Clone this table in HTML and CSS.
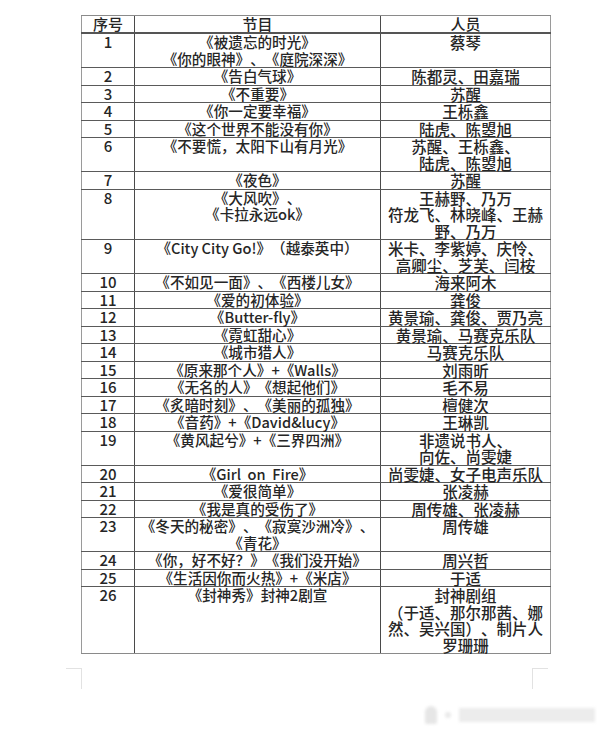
FILE: index.html
```html
<!DOCTYPE html>
<html lang="zh-CN">
<head>
<meta charset="utf-8">
<title>节目单</title>
<link rel="stylesheet" href="styles.css">
</head>
<body>
<div class="page">
  <table class="list">
    <colgroup>
      <col class="c-no">
      <col class="c-show">
      <col class="c-who">
    </colgroup>
    <thead>
      <tr><th>序号</th><th>节目</th><th>人员</th></tr>
    </thead>
    <tbody>
      <tr><td>1</td><td>《被遗忘的时光》<br>《你的眼神》、《庭院深深》</td><td>蔡琴</td></tr>
      <tr><td>2</td><td>《告白气球》</td><td>陈都灵、田嘉瑞</td></tr>
      <tr><td>3</td><td>《不重要》</td><td>苏醒</td></tr>
      <tr><td>4</td><td>《你一定要幸福》</td><td>王栎鑫</td></tr>
      <tr><td>5</td><td>《这个世界不能没有你》</td><td>陆虎、陈曌旭</td></tr>
      <tr><td>6</td><td>《不要慌，太阳下山有月光》</td><td>苏醒、王栎鑫、<br>陆虎、陈曌旭</td></tr>
      <tr><td>7</td><td>《夜色》</td><td>苏醒</td></tr>
      <tr><td>8</td><td>《大风吹》、<br>《卡拉永远ok》</td><td>王赫野、乃万<br>符龙飞、林晓峰、王赫<br>野、乃万</td></tr>
      <tr><td>9</td><td>《City City Go!》（越泰英中）</td><td>米卡、李紫婷、庆怜、<br>高卿尘、芝芙、闫桉</td></tr>
      <tr><td>10</td><td>《不如见一面》、《西楼儿女》</td><td>海来阿木</td></tr>
      <tr><td>11</td><td>《爱的初体验》</td><td>龚俊</td></tr>
      <tr><td>12</td><td>《Butter-fly》</td><td>黄景瑜、龚俊、贾乃亮</td></tr>
      <tr><td>13</td><td>《霓虹甜心》</td><td>黄景瑜、马赛克乐队</td></tr>
      <tr><td>14</td><td>《城市猎人》</td><td>马赛克乐队</td></tr>
      <tr><td>15</td><td>《原来那个人》+《Walls》</td><td>刘雨昕</td></tr>
      <tr><td>16</td><td>《无名的人》《想起他们》</td><td>毛不易</td></tr>
      <tr><td>17</td><td>《炙暗时刻》、《美丽的孤独》</td><td>檀健次</td></tr>
      <tr><td>18</td><td>《音药》+《David&amp;lucy》</td><td>王琳凯</td></tr>
      <tr><td>19</td><td>《黄风起兮》+《三界四洲》</td><td>非遗说书人、<br>向佐、尚雯婕</td></tr>
      <tr><td>20</td><td>《Girl&nbsp; on&nbsp; Fire》</td><td>尚雯婕、女子电声乐队</td></tr>
      <tr><td>21</td><td>《爱很简单》</td><td>张凌赫</td></tr>
      <tr><td>22</td><td>《我是真的受伤了》</td><td>周传雄、张凌赫</td></tr>
      <tr><td>23</td><td>《冬天的秘密》、《寂寞沙洲冷》、<br>《青花》</td><td>周传雄</td></tr>
      <tr><td>24</td><td>《你，好不好？》《我们没开始》</td><td>周兴哲</td></tr>
      <tr><td>25</td><td>《生活因你而火热》+《米店》</td><td>于适</td></tr>
      <tr class="last"><td>26</td><td>《封神秀》封神2剧宣</td><td>封神剧组<br>（于适、那尔那茜、娜<br>然、吴兴国）、制片人<br>罗珊珊</td></tr>
    </tbody>
  </table>
  <div class="marks">
    <span class="mark mark-left"></span>
    <span class="mark mark-right"></span>
  </div>
  <div class="watermark">
    <span class="wm-logo"></span>
    <span class="wm-dot"></span>
    <span class="wm-text"></span>
  </div>
</div>
</body>
</html>
```
FILE: styles.css
```css
html, body {
  margin: 0;
  padding: 0;
  background: #ffffff;
}

.page {
  width: 600px;
  height: 734px;
  padding-top: 15px;
  box-sizing: border-box;
  overflow: hidden;
  font-family: "Noto Sans CJK SC", "Noto Sans", sans-serif;
  color: #262626;
}

.list {
  margin-left: 81px;
  width: 469px;
  border-collapse: collapse;
  table-layout: fixed;
  font-size: 15px;
  font-weight: 500;
  line-height: 16.5px;
  text-spacing-trim: space-all;
  border-left: 1px solid #9a9a9a;
  border-right: 1px solid #9a9a9a;
}

.c-no { width: 53px; }
.c-show { width: 246px; }
.c-who { width: 170px; }

.list th,
.list td {
  padding: 0;
  text-align: center;
  vertical-align: top;
  white-space: nowrap;
  overflow: visible;
  border-top: 1px solid #5a5a5a;
  border-bottom: 1px solid #5a5a5a;
  border-left: 1px solid #4a4a4a;
  font-weight: 500;
}

.list td:nth-child(2) {
  font-size: 14.6px;
}

.list td:nth-child(3) {
  font-size: 15.5px;
}

.list th:first-child,
.list td:first-child {
  border-left: 1px solid #9a9a9a;
}

.list thead th {
  border-top: 1px solid #8a8a8a;
  border-bottom: 2px solid #555555;
  line-height: 16px;
}

.list tr.last td {
  border-bottom: 1px solid #8a8a8a;
}

.marks {
  display: flex;
  justify-content: space-between;
  width: 470px;
  margin-left: 66px;
  margin-top: 14px;
}

.mark {
  display: block;
  width: 15px;
  height: 20px;
  border-top: 1px solid #e2e2e2;
}

.mark-left {
  border-right: 1px solid #e2e2e2;
}

.mark-right {
  margin-right: -12px;
  border-left: 1px solid #e2e2e2;
}

.watermark {
  display: flex;
  align-items: center;
  gap: 8px;
  margin-left: 425px;
  margin-top: 16px;
  height: 20px;
  filter: blur(1.5px);
}

.wm-logo {
  width: 12px;
  height: 18px;
  border-radius: 6px 6px 2px 2px;
  background: #e6e6e6;
}

.wm-dot {
  width: 6px;
  height: 6px;
  border-radius: 3px;
  background: #e9e9e9;
}

.wm-text {
  width: 136px;
  height: 14px;
  background: #ececec;
}
```
